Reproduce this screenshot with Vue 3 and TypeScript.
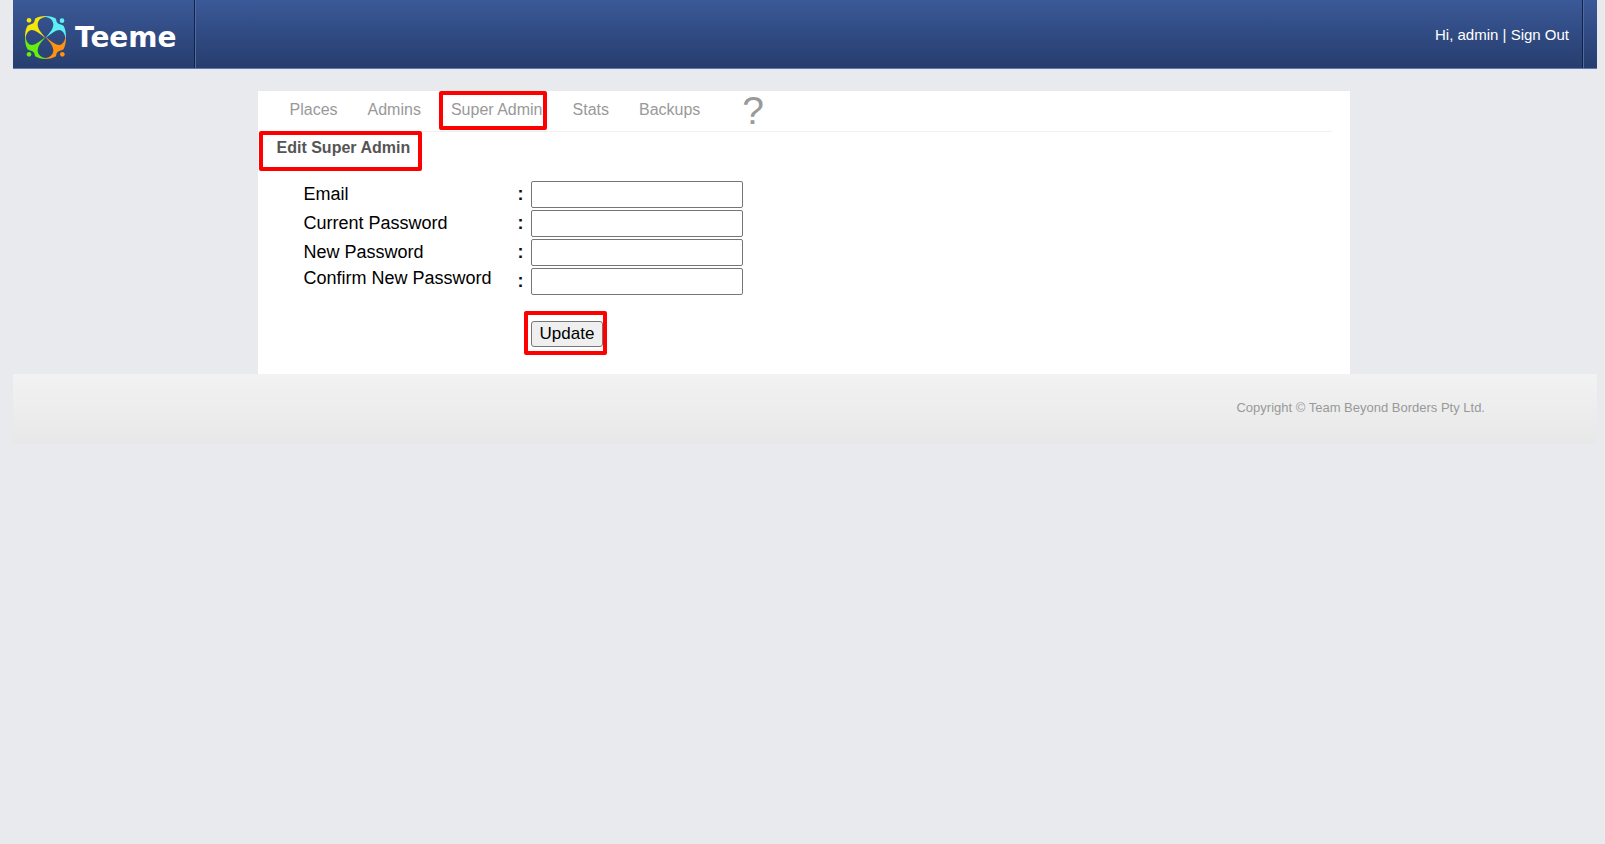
<script setup lang="ts">
import { reactive, ref } from 'vue'

interface Field {
  id: 'email' | 'current' | 'next' | 'confirm'
  label: string
  type: string
}

const tabs: string[] = ['Places', 'Admins', 'Super Admin', 'Stats', 'Backups']
const active = ref('Super Admin')

const fields: Field[] = [
  { id: 'email', label: 'Email', type: 'text' },
  { id: 'current', label: 'Current Password', type: 'password' },
  { id: 'next', label: 'New Password', type: 'password' },
  { id: 'confirm', label: 'Confirm New Password', type: 'password' },
]

const form = reactive<Record<Field['id'], string>>({ email: '', current: '', next: '', confirm: '' })

const figure =
  'M62 0 C48 0 38 3 30 8 C29 16 27 20 22 23 C17 26 10 26 7 30 C2 39 0 50 0 65 L2 65 C4 52 10 43 20 42 C34 42 46 56 62 66 C54 56 39 42 38 27 C38 13 48 4 62 3 Z'
</script>

<template>
  <div class="page">
    <header class="top">
      <a class="brand" href="#">
        <svg class="mark" viewBox="0 0 123 129" aria-hidden="true">
          <g fill="#f5e60a">
            <path :d="figure" />
            <circle cx="12" cy="13" r="7" />
          </g>
          <g fill="#5cf0f2" transform="translate(123 0) scale(-1 1)">
            <path :d="figure" />
            <circle cx="12" cy="14" r="7" />
          </g>
          <g fill="#66ee11" transform="translate(0 129) scale(1 -1)">
            <path :d="figure" />
            <circle cx="12" cy="14" r="7" />
          </g>
          <g fill="#ff9211" transform="translate(123 129) scale(-1 -1)">
            <path :d="figure" />
            <circle cx="11" cy="14" r="7" />
          </g>
        </svg>
        <span class="name">Teeme</span>
      </a>
      <div class="user">
        <span>Hi, admin | <a href="#">Sign Out</a></span>
      </div>
    </header>

    <main class="panel">
      <nav class="tabs">
        <a
          v-for="tab in tabs"
          :key="tab"
          href="#"
          :class="{ marked: tab === active }"
          @click.prevent="active = tab"
          >{{ tab }}</a
        >
        <a class="help" href="#" aria-label="Help">?</a>
      </nav>

      <h1><span class="title">Edit Super Admin</span></h1>

      <form @submit.prevent>
        <div v-for="field in fields" :key="field.id" class="row" :class="field.id">
          <label :for="field.id">{{ field.label }}</label>
          <span class="colon">:</span>
          <input :id="field.id" v-model="form[field.id]" :type="field.type" />
        </div>
        <div class="actions">
          <span class="submit"><button type="submit">Update</button></span>
        </div>
      </form>
    </main>

    <footer>Copyright © Team Beyond Borders Pty Ltd.</footer>
  </div>
</template>

<style>
body {
  margin: 0;
  background: #e9eaee;
}
</style>

<style scoped>
.page {
  padding: 0 8px 0 13px;
  font-family: 'Liberation Sans', Arial, sans-serif;
  font-size: 16px;
}

a {
  color: inherit;
  text-decoration: none;
}

.top {
  box-sizing: border-box;
  height: 69px;
  display: flex;
  justify-content: space-between;
  border-bottom: 1px solid #6079ab;
  background: linear-gradient(#3b5998, #263d6e);
}

.brand {
  box-sizing: border-box;
  width: 183px;
  padding: 6px 0 0 12px;
  display: flex;
  align-items: center;
  gap: 9px;
  border-right: 1px solid #4d6cab;
  box-shadow: inset -1px 0 #14213f;
}

.mark {
  width: 41px;
  height: 43px;
}

.name {
  padding-top: 2px;
  color: #fff;
  font: bold 28px/30px 'DejaVu Sans', sans-serif;
}

.user {
  padding-right: 14px;
  margin-right: 13px;
  border-right: 1px solid #4d6cab;
  box-shadow: inset -1px 0 #14213f;
  display: flex;
  align-items: center;
  color: #fff;
  font-size: 15px;
}

.panel {
  box-sizing: border-box;
  width: 69%;
  margin: 22px 0 0 calc(15.5% - 1px);
  padding: 0 18px 27px 19px;
  background: #fff;
}

.tabs {
  height: 40px;
  padding-left: 13px;
  display: flex;
  gap: 30px;
  border-bottom: 1px solid #f0f0f0;
  color: #999;
  line-height: 38px;
}

.help {
  margin-left: 12px;
  font-size: 39px;
  line-height: 40px;
}

/* Red frames call attention to the steps of the procedure */
.marked,
.title,
.submit {
  position: relative;
}

.marked::after,
.title::after,
.submit::after {
  content: '';
  position: absolute;
  border: 4px solid #f00;
  border-radius: 2px;
  pointer-events: none;
}

.marked::after {
  inset: 0 -4px 1px -12px;
}

.title::after {
  inset: -7px -12px -13px -18px;
}

.submit::after {
  inset: -10px -4px -8px -7px;
}

h1 {
  margin: 0;
  padding-top: 6px;
  color: #555;
  font-size: 16px;
  line-height: 20px;
}

.title {
  display: inline-block;
}

form {
  padding: 23px 0 0 27px;
}

.row {
  display: flex;
  align-items: center;
  height: 27px;
  margin-bottom: 2px;
}

label {
  width: 214px;
  font-size: 18px;
  line-height: 21px;
}

.confirm label {
  align-self: flex-start;
}

.colon {
  width: 13px;
  color: #012;
  font-size: 18px;
  font-weight: bold;
}

input {
  box-sizing: border-box;
  width: 212px;
  height: 27px;
  padding: 1px 2px;
  border: 1px solid #767676;
  border-radius: 2px;
  background: #fff;
  font: inherit;
}

.actions {
  display: flex;
  padding: 24px 0 0 227px;
}

.submit {
  display: flex;
}

button {
  height: 26px;
  padding: 0 8px;
  border: 1px solid #767676;
  border-radius: 3px;
  background: #efefef;
  color: #000;
  font: 17px/24px 'Liberation Sans', Arial, sans-serif;
}

footer {
  box-sizing: border-box;
  height: 70px;
  padding: 26px 112px 0 0;
  background: linear-gradient(#f2f2f2, #e8e8e8);
  color: #999;
  font-size: 13px;
  line-height: 16px;
  text-align: right;
}
</style>
